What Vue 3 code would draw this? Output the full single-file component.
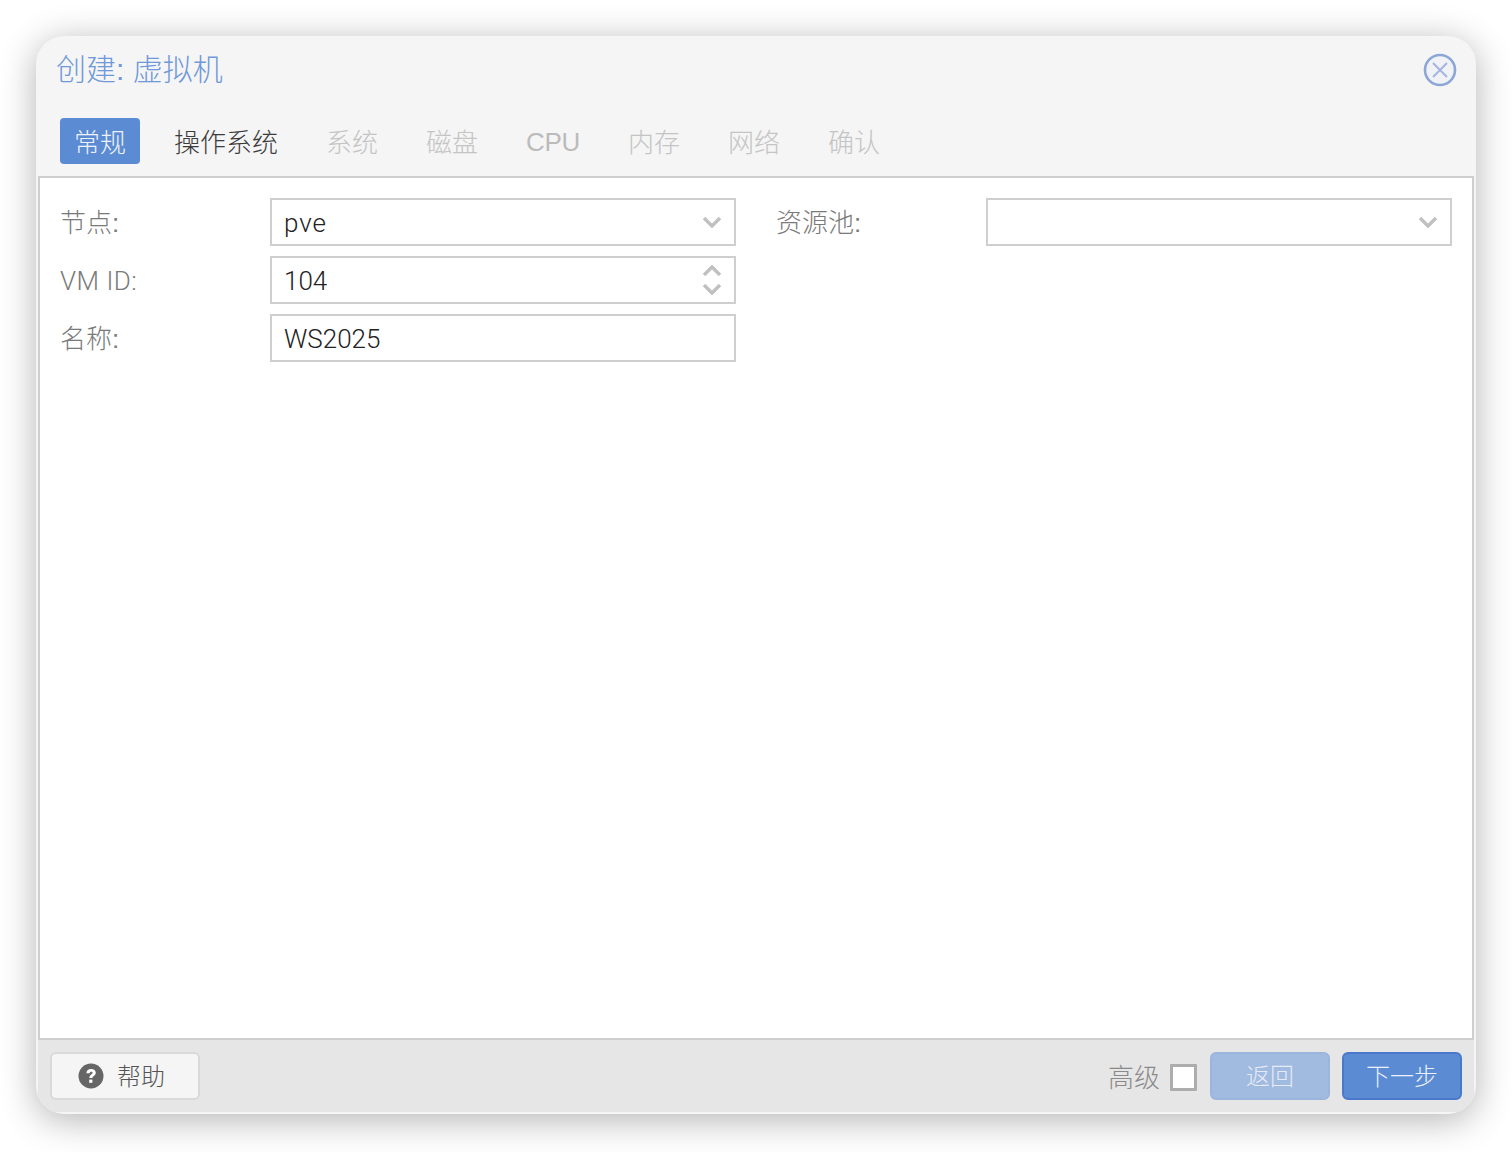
<template>
  <div class="page">
    <div class="window">
      <header class="title-bar">
        <span class="title">创建: 虚拟机</span>
        <button class="close-btn" aria-label="关闭">
          <svg width="34" height="34" viewBox="0 0 34 34">
            <circle cx="17" cy="17" r="15" fill="#f0f2f8" stroke="#8ca6d8" stroke-width="2.6" />
            <path d="M10 10 24 24M24 10 10 24" stroke="#a3b5e0" stroke-width="2" fill="none" />
          </svg>
        </button>
      </header>

      <nav class="tabs">
        <span
          v-for="tab in tabs"
          :key="tab.name"
          class="tab"
          :class="[tab.state, { latin: tab.name === 'CPU' }]"
        >{{ tab.name }}</span>
      </nav>

      <main class="body">
        <div class="form-col">
          <div class="row">
            <label class="cjk">节点:</label>
            <div class="field">
              <span class="value wide">pve</span>
              <svg class="chevron" width="20" height="12" viewBox="0 0 20 12">
                <path d="M2 2 10 10 18 2" />
              </svg>
            </div>
          </div>
          <div class="row">
            <label class="latin">VM ID:</label>
            <div class="field">
              <span class="value">104</span>
              <div class="spinner">
                <svg class="chevron" width="20" height="12" viewBox="0 0 20 12">
                  <path d="M2 10 10 2 18 10" />
                </svg>
                <svg class="chevron" width="20" height="12" viewBox="0 0 20 12">
                  <path d="M2 2 10 10 18 2" />
                </svg>
              </div>
            </div>
          </div>
          <div class="row">
            <label class="cjk">名称:</label>
            <div class="field">
              <span class="value">WS2025</span>
            </div>
          </div>
        </div>
        <div class="form-col">
          <div class="row">
            <label class="cjk">资源池:</label>
            <div class="field">
              <span class="value"></span>
              <svg class="chevron" width="20" height="12" viewBox="0 0 20 12">
                <path d="M2 2 10 10 18 2" />
              </svg>
            </div>
          </div>
        </div>
      </main>

      <footer class="footer">
        <button class="help-btn">
          <svg width="26" height="26" viewBox="0 0 26 26">
            <circle cx="13" cy="13" r="12.5" fill="#666" />
            <path d="M8.4 10.2c0-2.7 2-4.2 4.7-4.2 2.8 0 4.7 1.5 4.7 3.8 0 1.8-1.1 2.7-2.3 3.4-.9.6-1.1.9-1.1 1.9h-3c0-1.9.6-2.9 1.8-3.7.9-.6 1.4-1 1.4-1.6 0-.7-.6-1.1-1.4-1.1-.9 0-1.5.6-1.6 1.6z" fill="#fff" />
            <rect x="11.2" y="16.6" width="3.2" height="3.2" fill="#fff" />
          </svg>
          <span>帮助</span>
        </button>
        <div class="spacer"></div>
        <span class="advanced">高级</span>
        <span class="checkbox"></span>
        <button class="nav-btn back">返回</button>
        <button class="nav-btn next">下一步</button>
      </footer>
    </div>
  </div>
</template>

<script setup>
const tabs = [
  { name: '常规', state: 'active' },
  { name: '操作系统', state: 'normal' },
  { name: '系统', state: 'disabled' },
  { name: '磁盘', state: 'disabled' },
  { name: 'CPU', state: 'disabled' },
  { name: '内存', state: 'disabled' },
  { name: '网络', state: 'disabled' },
  { name: '确认', state: 'disabled' }
]
</script>

<style>
html, body {
  background: #fff;
}
</style>

<style scoped>
.page {
  width: 1512px;
  height: 1152px;
  padding: 36px;
  box-sizing: border-box;
  background: #fff;
  font-family: "Liberation Sans", "Noto Sans CJK SC", sans-serif;
  font-weight: 300;
  overflow: hidden;
}
.window {
  height: 1078px;
  box-sizing: border-box;
  display: flex;
  flex-direction: column;
  padding: 0 2px 2px;
  background: #f5f5f5;
  border-radius: 28px;
  overflow: hidden;
  box-shadow: 0 6px 36px rgba(0, 0, 0, 0.3);
}
.title-bar {
  height: 68px;
  flex: none;
  display: flex;
  align-items: center;
  justify-content: space-between;
  padding: 0 17px 0 18px;
}
.title {
  padding-bottom: 7px;
  font-size: 30px;
  color: #6f99d9;
}
.close-btn {
  width: 34px;
  height: 34px;
  padding: 0;
  border: none;
  background: none;
}
.close-btn svg {
  display: block;
  filter: blur(0.5px);
}
.tabs {
  flex: none;
  display: flex;
  gap: 20px;
  padding: 14px 0 12px 22px;
}
.tab {
  height: 46px;
  box-sizing: border-box;
  line-height: 46px;
  padding: 2px 14px 0;
  font-size: 26px;
  border-radius: 4px;
  color: #3c3c3c;
}
.tab.active {
  background: #5b8bd3;
  color: #eef3fa;
}
.tab.disabled {
  color: #c4c4c4;
}
.tab.latin {
  padding-top: 1px;
  letter-spacing: -0.35px;
  color: #bbb;
}
.body {
  flex: 1;
  display: grid;
  grid-template-columns: 1fr 1fr;
  column-gap: 40px;
  padding: 20px;
  background: #fff;
  border: 2px solid #cfcfcf;
}
.form-col {
  display: flex;
  flex-direction: column;
  gap: 10px;
}
.row {
  display: grid;
  grid-template-columns: 210px 1fr;
  align-items: center;
}
.row label {
  font-size: 26px;
  color: #7a7a7a;
}
.row label.cjk {
  padding-bottom: 3px;
}
.row label.latin {
  padding-top: 2px;
  font-family: Roboto, "Liberation Sans", sans-serif;
  letter-spacing: 0.5px;
}
.field {
  height: 48px;
  box-sizing: border-box;
  display: flex;
  align-items: center;
  justify-content: space-between;
  padding: 0 12px 0 12px;
  border: 2px solid #cfcfcf;
  background: #fff;
}
.value {
  padding-top: 2px;
  font-family: Roboto, "Liberation Sans", sans-serif;
  font-size: 26px;
  color: #222;
}
.value.wide {
  letter-spacing: 0.9px;
}
.chevron {
  display: block;
  filter: blur(0.4px);
}
.chevron path {
  fill: none;
  stroke: #c0c0c0;
  stroke-width: 3.4;
}
.spinner {
  display: flex;
  flex-direction: column;
  gap: 6px;
}
.footer {
  height: 72px;
  flex: none;
  display: flex;
  align-items: center;
  padding: 0 12px;
  background: #e6e6e6;
}
.help-btn {
  width: 150px;
  height: 48px;
  display: flex;
  align-items: center;
  gap: 13px;
  padding: 0 0 0 26px;
  background: #f5f5f5;
  border: 2px solid #d9d9d9;
  border-radius: 6px;
  font: inherit;
  font-size: 24px;
  color: #555;
}
.help-btn span {
  padding-bottom: 4px;
}
.help-btn svg {
  flex: none;
}
.spacer {
  flex: 1;
}
.advanced {
  padding-bottom: 2px;
  font-size: 26px;
  color: #8a8a8a;
}
.checkbox {
  width: 27px;
  height: 27px;
  box-sizing: border-box;
  margin: 2px 13px 0 10px;
  background: #fff;
  border: 3px solid #adadad;
  border-radius: 1px;
}
.nav-btn {
  width: 120px;
  height: 48px;
  padding: 0 0 4px;
  border-radius: 6px;
  font: inherit;
  font-size: 24px;
  color: #fff;
}
.back {
  background: #a1bae0;
  border: 2px solid #9cb5dd;
  color: #e4ebf6;
}
.next {
  margin-left: 12px;
  background: #5b8bd3;
  border: 2px solid #4a78cb;
  color: #eaf0f9;
}
</style>
